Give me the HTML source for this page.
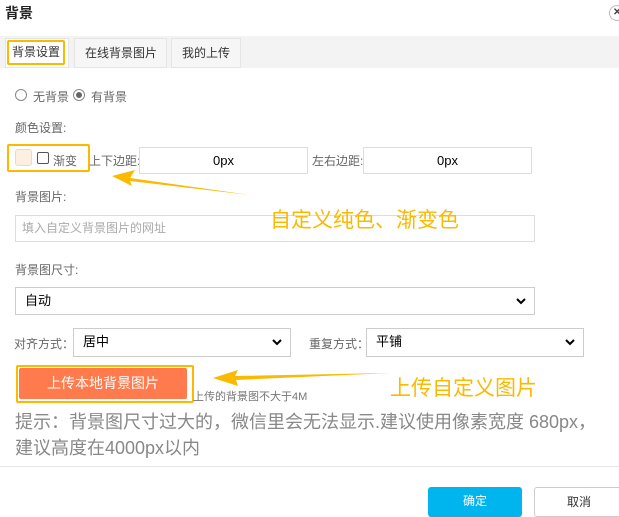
<!DOCTYPE html>
<html><head><meta charset="utf-8"><style>
*{margin:0;padding:0;box-sizing:border-box}
body{width:619px;height:513px;overflow:hidden;background:#fff;font-family:"Liberation Sans","Noto Sans CJK SC",sans-serif;position:relative;color:#666;font-size:12px}
.a{position:absolute;white-space:nowrap}
.box{position:absolute;border:1px solid #ddd;background:#fff}
.sel{position:absolute;border:1px solid #ccc;background:#fff;color:#000;font-size:13px;padding-left:9px;line-height:26px}
.sel svg{position:absolute;right:8px;top:10px}
</style></head><body>
<div class="a" style="left:5px;top:3px;font-size:14px;font-weight:bold;color:#222">背景</div>
<div class="a" style="left:609px;top:5px;width:16px;height:16px;border:1px solid #bbb;border-radius:50%;font-size:10px;line-height:14px;padding-left:3px;color:#444;font-weight:bold">✕</div>
<div class="a" style="left:0;top:36px;width:619px;height:32px;background:#f3f3f3"></div>
<div class="a" style="left:5px;top:38px;width:64px;height:30px;background:#fff;border:1px solid #e5e5e5"></div>
<div class="a" style="left:7px;top:40px;width:58px;height:25px;border:2px solid #fbb900;border-radius:2px;font-size:12px;color:#333;line-height:21px;padding-left:3px">背景设置</div>
<div class="a" style="left:74px;top:38px;width:93px;height:30px;background:#f6f6f6;border:1px solid #e5e5e5;color:#333;line-height:28px;padding-left:10px">在线背景图片</div>
<div class="a" style="left:171px;top:38px;width:70px;height:30px;background:#f6f6f6;border:1px solid #e5e5e5;color:#333;line-height:28px;padding-left:10px">我的上传</div>
<div class="a" style="left:15px;top:89px;width:12px;height:12px;border:1px solid #888;border-radius:50%"></div>
<div class="a" style="left:33px;top:88px">无背景</div>
<div class="a" style="left:73px;top:89px;width:12px;height:12px;border:1px solid #888;border-radius:50%"><div style="margin:2px;width:6px;height:6px;border-radius:50%;background:#666"></div></div>
<div class="a" style="left:91px;top:88px">有背景</div>
<div class="a" style="left:15px;top:119px">颜色设置:</div>
<div class="a" style="left:7px;top:144px;width:83px;height:28px;border:2px solid #fbb900;border-radius:2px"></div>
<div class="a" style="left:15px;top:149px;width:17px;height:17px;background:#fdf0e0;border:1px solid #ddd;border-radius:3px"></div>
<div class="a" style="left:37px;top:152px;width:12px;height:12px;border:1px solid #555;border-radius:2px"></div>
<div class="a" style="left:53px;top:152px">渐变</div>
<div class="a" style="left:89px;top:152px">上下边距:</div>
<div class="box" style="left:139px;top:147px;width:169px;height:27px;text-align:center;line-height:25px;color:#000;font-size:13px">0px</div>
<div class="a" style="left:312px;top:152px">左右边距:</div>
<div class="box" style="left:363px;top:147px;width:169px;height:27px;text-align:center;line-height:25px;color:#000;font-size:13px">0px</div>
<div class="a" style="left:15px;top:188px">背景图片:</div>
<div class="box" style="left:15px;top:215px;width:520px;height:27px;line-height:25px;padding-left:6px;color:#aaa">填入自定义背景图片的网址</div>
<div class="a" style="left:15px;top:261px">背景图尺寸:</div>
<div class="sel" style="left:15px;top:287px;width:520px;height:28px">自动<svg width="10" height="7"><path d="M1 1L5 5L9 1" stroke="#000" stroke-width="2" fill="none"/></svg></div>
<div class="a" style="left:14px;top:335px">对齐方式：</div>
<div class="sel" style="left:73px;top:328px;width:218px;height:29px">居中<svg width="10" height="7"><path d="M1 1L5 5L9 1" stroke="#000" stroke-width="2" fill="none"/></svg></div>
<div class="a" style="left:309px;top:335px">重复方式：</div>
<div class="sel" style="left:366px;top:328px;width:218px;height:29px">平铺<svg width="10" height="7"><path d="M1 1L5 5L9 1" stroke="#000" stroke-width="2" fill="none"/></svg></div>
<div class="a" style="left:16px;top:365px;width:178px;height:38px;border:2px solid #fbb900;border-radius:2px"></div>
<div class="a" style="left:19px;top:368px;width:168px;height:31px;background:#ff7a4d;border-radius:2px;color:#fff;font-size:14px;line-height:31px;text-align:center">上传本地背景图片</div>
<div class="a" style="left:193px;top:388px;font-size:11px;color:#777">上传的背景图不大于4M</div>
<div class="a" style="left:15px;top:408px;font-size:18px;color:#888">提示：背景图尺寸过大的，微信里会无法显示.建议使用像素宽度 680px，</div>
<div class="a" style="left:15px;top:434px;font-size:18px;color:#888">建议高度在4000px以内</div>
<div class="a" style="left:0;top:466px;width:619px;height:1px;background:#e5e5e5"></div>
<div class="a" style="left:428px;top:487px;width:94px;height:30px;background:#00b5ee;border-radius:3px;color:#fff;text-align:center;line-height:28px">确定</div>
<div class="a" style="left:534px;top:487px;width:90px;height:30px;border:1px solid #ccc;border-radius:3px;color:#333;text-align:center;line-height:28px">取消</div>
<svg class="a" style="left:0;top:0" width="619" height="513">
<polygon points="250,195 130,178 135,170 112,176 132,186 130,181" fill="#fbb900"/>
<polygon points="390,373 235,376 238,370 213,378 238,386 236,380" fill="#fbb900"/>
</svg>
<div class="a" style="left:270px;top:204px;font-size:21px;color:#fbb900">自定义纯色、渐变色</div>
<div class="a" style="left:390px;top:372px;font-size:21px;color:#fbb900">上传自定义图片</div>
</body></html>
